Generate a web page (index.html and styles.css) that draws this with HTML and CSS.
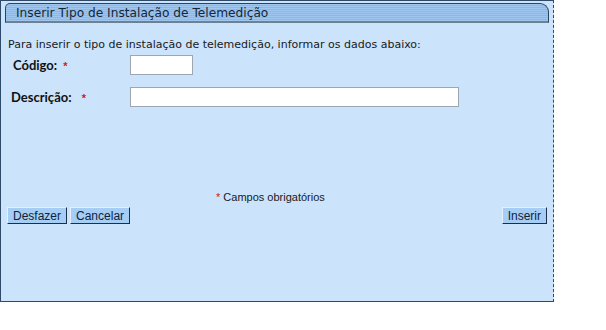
FILE: index.html
```html
<!DOCTYPE html>
<html lang="pt-BR">
<head>
    <meta charset="UTF-8">
    <title>Inserir Tipo de Instalação de Telemedição</title>
    <link rel="stylesheet" href="styles.css">
</head>
<body>
    <div class="panel">
        <div class="tab">Inserir Tipo de Instalação de Telemedição</div>

        <p class="intro">Para inserir o tipo de instalação de telemedição, informar os dados abaixo:</p>

        <div class="form-grid">
            <label class="field-label" for="codigo">Código: <span class="req">*</span></label>
            <input type="text" id="codigo" class="input input-short">

            <label class="field-label label-desc" for="descricao">Descrição: <span class="req">*</span></label>
            <input type="text" id="descricao" class="input input-long">
        </div>

        <div class="required-note"><span class="req">*</span> Campos obrigatórios</div>

        <div class="button-row">
            <div class="button-group">
                <button class="btn">Desfazer</button>
                <button class="btn">Cancelar</button>
            </div>
            <button class="btn">Inserir</button>
        </div>
    </div>
</body>
</html>
```

FILE: styles.css
```css
* {
    margin: 0;
    padding: 0;
    box-sizing: border-box;
}

body {
    background: #ffffff;
    font-family: 'DejaVu Sans', Verdana, sans-serif;
}

.panel {
    width: 554px;
    height: 302px;
    border: 1px solid #2f4a68;
    border-right-style: dashed;
    background: #cbe3fb;
    padding: 2px 4px 0 4px;
}

.tab {
    height: 20px;
    border: 1px solid #2a4460;
    border-bottom: 2px solid #6d8193;
    border-radius: 5px 9px 0 0;
    background: repeating-linear-gradient(to bottom, #9fc6ee 0, #9fc6ee 1px, #8cb8e6 1px, #8cb8e6 2px);
    color: #13273b;
    font-size: 12.2px;
    line-height: 18px;
    padding-left: 10px;
}

.intro {
    font-size: 11px;
    color: #1a1a1a;
    margin: 15px 0 0 3px;
}

.form-grid {
    display: grid;
    grid-template-columns: 125px 329px;
    row-gap: 12px;
    align-items: center;
    margin-top: 4px;
}

.field-label {
    font-family: Lato, 'Open Sans', sans-serif;
    font-weight: bold;
    font-size: 13px;
    color: #111111;
    padding-left: 8px;
}

.label-desc {
    padding-left: 6px;
}

.req {
    color: #d42020;
    font-family: 'Liberation Sans', Arial, sans-serif;
    font-weight: bold;
    font-size: 11px;
    margin-left: 3px;
}

.label-desc .req {
    margin-left: 7px;
}

.input {
    height: 20px;
    border: 1px solid #9ea6af;
    background: #ffffff;
}

.input-short {
    width: 63px;
}

.input-long {
    width: 329px;
}

.required-note {
    font-family: 'Liberation Sans', Arial, sans-serif;
    font-size: 11px;
    color: #1a1a1a;
    margin-top: 84px;
    padding-left: 211px;
}

.required-note .req {
    margin-left: 0;
    font-weight: normal;
}

.button-row {
    display: flex;
    justify-content: space-between;
    align-items: center;
    margin-top: 4px;
    padding: 0 2px 0 2px;
}

.button-group {
    display: flex;
    gap: 3px;
}

.btn {
    font-family: 'Liberation Sans', Arial, sans-serif;
    font-size: 12px;
    color: #0d2440;
    background: #a6cdf4;
    height: 17px;
    line-height: 14px;
    padding: 0 5px 0 5px;
    border: 1px solid;
    border-color: #e4f1fd #1b2f4b #1b2f4b #e4f1fd;
}
```
